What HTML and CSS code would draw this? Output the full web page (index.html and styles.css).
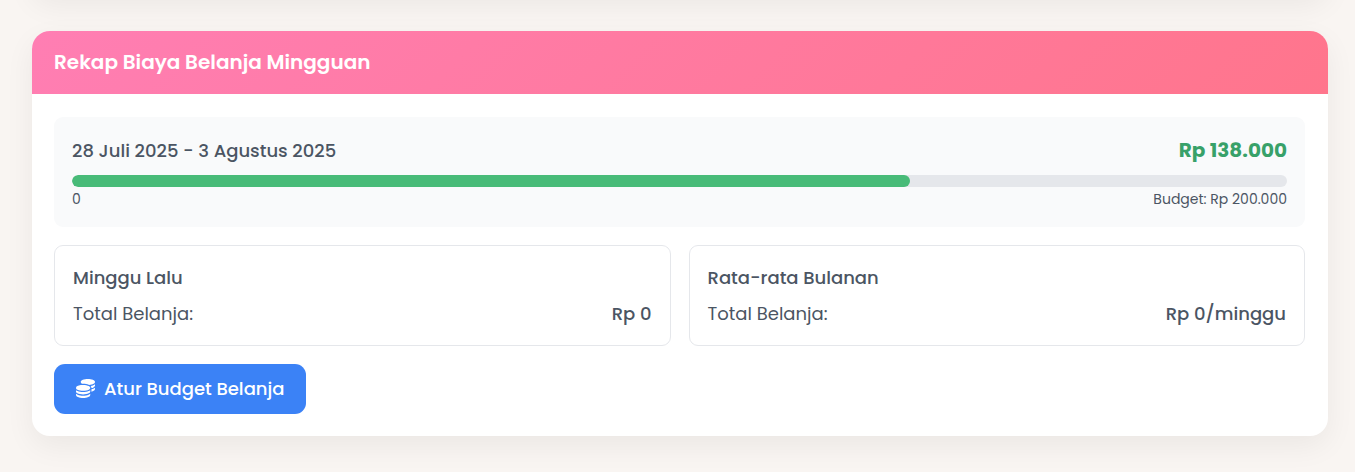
FILE: index.html
```html
<!DOCTYPE html>
<html lang="id">
<head>
<meta charset="utf-8">
<meta name="viewport" content="width=device-width, initial-scale=1">
<title>Rekap Biaya Belanja Mingguan</title>
<link rel="stylesheet" href="styles.css">
</head>
<body>
<main class="page">
  <div class="card card-previous"></div>
  <section class="card" aria-labelledby="recap-title">
    <header class="card-header">
      <h2 class="card-title" id="recap-title">Rekap Biaya Belanja Mingguan</h2>
    </header>
    <div class="card-body">
      <div class="week">
        <div class="row week-heading">
          <span class="period">28 Juli 2025 - 3 Agustus 2025</span>
          <strong class="total">Rp 138.000</strong>
        </div>
        <div class="track" role="progressbar" aria-label="Pemakaian budget" aria-valuemin="0" aria-valuemax="200000" aria-valuenow="138000">
          <div class="fill" style="width: 69%"></div>
        </div>
        <div class="row scale"><span>0</span><span>Budget: Rp 200.000</span></div>
      </div>
      <div class="stats">
        <article class="stat">
          <h3 class="stat-title">Minggu Lalu</h3>
          <div class="row"><span>Total Belanja:</span><span class="value">Rp 0</span></div>
        </article>
        <article class="stat">
          <h3 class="stat-title">Rata-rata Bulanan</h3>
          <div class="row"><span>Total Belanja:</span><span class="value">Rp 0/minggu</span></div>
        </article>
      </div>
      <button class="button" type="button">
        <svg class="icon" viewBox="0 0 512 512" aria-hidden="true"><path fill="currentColor" d="M512 80c0 18-14.3 34.6-38.4 48c-29.1 16.1-72.5 27.5-122.3 30.9c-3.7-1.8-7.4-3.5-11.3-5C300.6 137.4 248.2 128 192 128c-8.3 0-16.4 .2-24.5 .6l-1.1-.6C142.3 114.6 128 98 128 80c0-44.2 86-80 192-80S512 35.8 512 80zM160.7 161.1c10.2-.7 20.7-1.1 31.3-1.1c62.2 0 117.4 12.3 152.5 31.4C369.3 204.9 384 221.7 384 240c0 4-.7 7.9-2.1 11.7c-4.6 13.2-17 25.3-35 35.5c-.1 .1-.3 .1-.4 .2c-.3 .2-.6 .3-.9 .5c-35 19.4-90.8 32-153.6 32c-59.6 0-112.9-11.3-148.2-29.1c-1.9-.9-3.7-1.9-5.5-2.9C14.3 274.6 0 258 0 240c0-34.8 53.4-64.5 128-75.4c10.5-1.5 21.4-2.7 32.7-3.5zM416 240c0-21.9-10.6-39.9-24.1-53.4c28.3-4.4 54.2-11.4 76.2-20.5c16.3-6.8 31.5-15.2 43.9-25.5V176c0 19.3-16.5 37.1-43.8 50.9c-14.6 7.4-32.4 13.7-52.4 18.5c.1-1.8 .2-3.5 .2-5.3zm-32 96c0 18-14.3 34.6-38.4 48c-1.8 1-3.6 1.9-5.5 2.9C304.9 404.7 251.6 416 192 416c-62.8 0-118.6-12.6-153.6-32C14.3 370.6 0 354 0 336V300.6c12.5 10.3 27.6 18.7 43.9 25.5C83.4 342.6 135.8 352 192 352s108.6-9.4 148.1-25.9c7.8-3.2 15.3-6.9 22.4-10.9c6.1-3.4 11.8-7.2 17.2-11.2c1.5-1.1 2.9-2.3 4.3-3.4V336zm32 0V278.1c19-4.2 36.5-9.5 52.1-16c16.3-6.8 31.5-15.2 43.9-25.5V272c0 10.5-5 21-14.9 30.9c-16.3 16.3-45 29.7-81.3 38.4c.1-1.7 .2-3.5 .2-5.3zM192 448c56.2 0 108.6-9.4 148.1-25.9c16.3-6.8 31.5-15.2 43.9-25.5V432c0 44.2-86 80-192 80S0 476.2 0 432V396.6c12.5 10.3 27.6 18.7 43.9 25.5C83.4 438.6 135.8 448 192 448z"/></svg>
        <span>Atur Budget Belanja</span>
      </button>
    </div>
  </section>
</main>
</body>
</html>
```

FILE: styles.css
```css
*, *::before, *::after {
  box-sizing: border-box;
}

body {
  margin: 0;
  background: #f9f5f2;
  color: #4b5563;
  font-family: Poppins, Inter, sans-serif;
  font-size: 18px;
  line-height: 27px;
}

.page {
  padding: 0 27px 36px 32px;
  overflow: hidden;
}

.card {
  background: #fff;
  border-radius: 18px;
  box-shadow: 0 10px 30px rgba(0, 0, 0, 0.06);
  overflow: hidden;
}

/* Tail of the preceding card, scrolled out above the viewport. */
.card-previous {
  height: 80px;
  margin: -85px 0 36px;
}

.card-header {
  padding: 18px 22px;
  background: linear-gradient(135deg, #ff7eb3, #ff758c);
  color: #fff;
}

.card-title {
  margin: 0;
  font-size: 20px;
  font-weight: 600;
  line-height: 27px;
}

.card-body {
  display: flex;
  flex-direction: column;
  gap: 18px;
  padding: 23px 23px 22px 22px;
}

.row {
  display: flex;
  justify-content: space-between;
  align-items: center;
  gap: 16px;
}

.week {
  padding: 18px;
  border-radius: 9px;
  background: #f9fafb;
}

.week-heading {
  margin-bottom: 9px;
  line-height: 31px;
}

.period,
.value {
  font-weight: 500;
}

.total {
  color: #38a169;
  font-size: 20px;
  font-weight: 700;
}

.track {
  height: 12px;
  border-radius: 6px;
  background: #e5e7eb;
  overflow: hidden;
}

.fill {
  height: 100%;
  border-radius: 6px;
  background: #48bb78;
}

.scale {
  margin-top: 3px;
  margin-bottom: 1px;
  font-size: 14px;
  line-height: 18px;
}

.stats {
  display: grid;
  grid-template-columns: 1fr 1fr;
  gap: 18px;
}

.stat {
  padding: 18px;
  border: 1px solid #e5e7eb;
  border-radius: 9px;
}

.stat-title {
  margin: 0 0 9px;
  font-size: 18px;
  font-weight: 500;
}

.button {
  display: flex;
  align-items: center;
  align-self: flex-start;
  gap: 9px;
  padding: 11px 22px 12px;
  border: 0;
  border-radius: 11px;
  background: #3b82f6;
  color: #fff;
  font: inherit;
  font-weight: 500;
  cursor: pointer;
}

.icon {
  width: 19px;
  height: 19px;
}
```
